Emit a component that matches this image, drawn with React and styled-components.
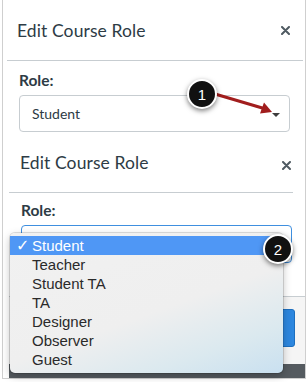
import React from 'react';
import styled, { createGlobalStyle } from 'styled-components';

const Global = createGlobalStyle`
    html, body {
        margin: 0;
        padding: 0;
        background: #ffffff;
    }
    body {
        width: 308px;
        height: 382px;
        overflow: hidden;
        font-family: Lato, "Open Sans", sans-serif;
    }
`

const roles = ['Student', 'Teacher', 'Student TA', 'TA', 'Designer', 'Observer', 'Guest'];

function CloseIcon() {
    return (
        <svg width="9" height="9" viewBox="0 0 9 9">
            <path d="M1 1 L8 8 M8 1 L1 8" stroke="#4f5a62" strokeWidth="2" strokeLinecap="round" />
        </svg>
    )
}

function Badge({ n, x, y }) {
    return <Circle style={{ left: x, top: y }}>{n}</Circle>
}

export default function App() {
    return (
        <Page>
            <Global />
            <Frame>
                <FirstShot>
                    <Header>
                        <Title>Edit Course Role</Title>
                        <Close><CloseIcon /></Close>
                    </Header>
                    <Divider left={4} right={2} />
                    <Body left={16}>
                        <Label>Role:</Label>
                        <Select>
                            <span>Student</span>
                            <Caret />
                        </Select>
                    </Body>
                </FirstShot>

                <SecondShot>
                    <Header second>
                        <Title>Edit Course Role</Title>
                        <Close second><CloseIcon /></Close>
                    </Header>
                    <Divider left={0} right={12} />
                    <Body left={12}>
                        <Label second>Role:</Label>
                        <Select focused />
                    </Body>
                    <Footer>
                        <UpdateButton />
                    </Footer>
                    <Backdrop />
                </SecondShot>
            </Frame>

            <Menu>
                {roles.map((r, i) => (
                    <MenuItem key={r} selected={i === 0}>
                        <Check>{i === 0 ? '✓' : ''}</Check>
                        {r}
                    </MenuItem>
                ))}
            </Menu>

            <Arrow width="308" height="140" viewBox="0 0 308 140">
                <line x1="215" y1="94" x2="264" y2="108.5" stroke="#a11d1d" strokeWidth="3" strokeLinecap="round" />
                <polygon points="272,112 260,113.5 264,102.5" fill="#a11d1d" />
            </Arrow>

            <Badge n="1" x={187} y={79} />
            <Badge n="2" x={263} y={234} />
        </Page>
    )
}

const Page = styled.div`
    position: relative;
    width: 308px;
    height: 382px;
`

const Frame = styled.div`
    margin-left: 2px;
    width: 302px;
    height: 378px;
    border: 1px solid #cfcfcf;
    border-top: none;
    display: flex;
    flex-direction: column;
`

const FirstShot = styled.div`
    height: 137px;
    display: flex;
    flex-direction: column;
`

const SecondShot = styled.div`
    margin-left: 6px;
    height: 241px;
    display: flex;
    flex-direction: column;
    background: #ffffff;
`

const Header = styled.div`
    height: ${p => p.second ? '55px' : '60px'};
    display: flex;
    align-items: center;
    justify-content: space-between;
    padding-left: ${p => p.second ? '11px' : '14px'};
    padding-right: ${p => p.second ? '14px' : '15px'};
    padding-bottom: ${p => p.second ? '4px' : '0'};
    box-sizing: border-box;
`

const Title = styled.h2`
    margin: 0;
    font-size: 17.5px;
    font-weight: 400;
    color: #2d3b45;
    letter-spacing: 0.1px;
`

const Close = styled.div`
    display: flex;
    margin-top: ${p => p.second ? '6px' : '1px'};
`

const Divider = styled.div`
    height: 1px;
    background: #c7cdd1;
    margin-left: ${p => p.left}px;
    margin-right: ${p => p.right}px;
`

const Body = styled.div`
    padding-left: ${p => p.left}px;
    display: flex;
    flex-direction: column;
`

const Label = styled.div`
    margin-top: ${p => p.second ? '7px' : '9px'};
    height: 20px;
    line-height: 20px;
    font-size: 15.5px;
    font-weight: 700;
    color: #2d3b45;
`

const Select = styled.div`
    margin-top: 5px;
    width: 271px;
    height: ${p => p.focused ? '38px' : '37px'};
    box-sizing: border-box;
    border: 1px solid ${p => p.focused ? '#3f8fdf' : '#c7cdd1'};
    border-radius: 4px;
    background: #ffffff;
    display: flex;
    align-items: center;
    justify-content: space-between;
    padding: 0 9px 0 12px;
    font-size: 14px;
    color: #2d3b45;
`

const Caret = styled.span`
    width: 0;
    height: 0;
    border-left: 4px solid transparent;
    border-right: 4px solid transparent;
    border-top: 4px solid #3d3d3d;
    margin-top: 2px;
`

const Footer = styled.div`
    margin-top: 33px;
    height: 68px;
    box-sizing: border-box;
    border-top: 1px solid #c7cdd1;
    background: #f5f5f5;
    display: flex;
    justify-content: flex-end;
    align-items: flex-start;
    padding: 12px 10px 0 0;
`

const UpdateButton = styled.div`
    width: 80px;
    height: 38px;
    box-sizing: border-box;
    border-radius: 3px;
    background: #2d87df;
    border: 1px solid #1d6fbf;
`

const Backdrop = styled.div`
    height: 14px;
    background: #555b60;
`

const Menu = styled.div`
    position: absolute;
    left: 10px;
    top: 233px;
    width: 273px;
    height: 140px;
    box-sizing: border-box;
    padding-top: 3px;
    border-radius: 5px;
    background: linear-gradient(160deg, #f1f1f1 0%, #efefef 55%, #dbe9ef 80%, #c9e0f0 100%);
    box-shadow: 0 0 0 1px rgba(0, 0, 0, 0.12), 0 3px 8px rgba(0, 0, 0, 0.25);
    font-family: "Liberation Sans", Arial, sans-serif;
    font-size: 15px;
    color: #2a2a2a;
`

const MenuItem = styled.div`
    height: 19px;
    line-height: 19px;
    display: flex;
    align-items: center;
    background: ${p => p.selected ? '#4f97f5' : 'transparent'};
    color: ${p => p.selected ? '#ffffff' : '#2a2a2a'};
`

const Check = styled.span`
    width: 22px;
    padding-left: 6px;
    box-sizing: border-box;
    font-size: 16px;
    font-weight: 700;
    font-family: "DejaVu Sans", sans-serif;
`

const Arrow = styled.svg`
    position: absolute;
    left: 0;
    top: 0;
`

const Circle = styled.div`
    position: absolute;
    width: 30px;
    height: 30px;
    box-sizing: border-box;
    border-radius: 50%;
    background: #111111;
    border: 2px solid #ffffff;
    box-shadow: 0 2px 5px rgba(0, 0, 0, 0.5);
    color: #ffffff;
    display: flex;
    align-items: center;
    justify-content: center;
    font-family: "Liberation Sans", Arial, sans-serif;
    font-size: 15px;
`
